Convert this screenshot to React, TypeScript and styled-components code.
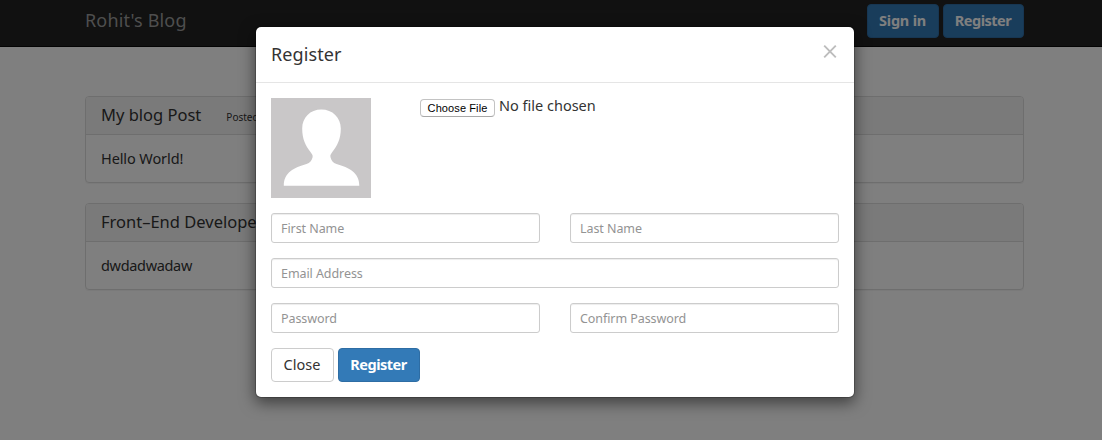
import React from "react";
import styled, { createGlobalStyle } from "styled-components";

const GlobalStyle = createGlobalStyle`
  *, *::before, *::after { box-sizing: border-box; }
  body {
    margin: 0;
    background: #fff;
    color: #333;
    font: 14.5px/20px "Noto Sans", "Open Sans", sans-serif;
    overflow: hidden;
  }
  h1, h2, h3, p { margin: 0; font-weight: 400; }
`;

const Page = styled.div`
  height: 440px;
  overflow: hidden;
`;

const Navbar = styled.header`
  display: flex;
  justify-content: space-between;
  align-items: flex-start;
  height: 47px;
  padding: 4px 78px 0 85px;
  background: #222;
  border-bottom: 1px solid #080808;
`;

const Brand = styled.h1`
  padding-top: 6px;
  font-size: 18px;
  line-height: 20px;
  color: #9d9d9d;
  letter-spacing: 0.15px;
`;

const ButtonRow = styled.div`
  display: flex;
  gap: 4px;
`;

const Button = styled.button<{ $primary?: boolean; $width: number; $track?: number }>`
  width: ${(p) => p.$width}px;
  height: 34px;
  padding: 0 1px 2px 0;
  border: 1px solid ${(p) => (p.$primary ? "#2e6da4" : "#ccc")};
  border-radius: 4px;
  background: ${(p) => (p.$primary ? "#337ab7" : "#fff")};
  color: ${(p) => (p.$primary ? "#fff" : "#333")};
  font: inherit;
  font-weight: ${(p) => (p.$primary ? 700 : 400)};
  letter-spacing: ${(p) => p.$track ?? 0}px;
  white-space: nowrap;
`;

const Posts = styled.main`
  display: flex;
  flex-direction: column;
  gap: 20px;
  padding: 49px 78px 0 85px;
`;

const Panel = styled.article`
  height: 87px;
  border: 1px solid #ddd;
  border-radius: 4px;
  box-shadow: 0 1px 1px rgba(0, 0, 0, 0.05);
  overflow: hidden;
`;

const PanelHeading = styled.div`
  display: flex;
  align-items: baseline;
  gap: 25px;
  height: 38px;
  padding: 8px 15px 0;
  background: #f5f5f5;
  border-bottom: 1px solid #ddd;
  white-space: nowrap;
`;

const PanelTitle = styled.h2`
  font-size: 16.5px;
  line-height: 20px;
`;

const Posted = styled.small`
  font-size: 10px;
`;

const PanelBody = styled.p<{ $track?: number }>`
  padding: 13px 15px 0;
  letter-spacing: ${(p) => p.$track ?? 0}px;
`;

const Backdrop = styled.div`
  position: absolute;
  inset: 0;
  display: flex;
  justify-content: center;
  align-items: flex-start;
  padding: 26px 0 0 8px;
  background: rgba(0, 0, 0, 0.5);
`;

const Modal = styled.section`
  width: 600px;
  height: 372px;
  border: 1px solid rgba(0, 0, 0, 0.2);
  border-radius: 6px;
  background: #fff;
  background-clip: padding-box;
  box-shadow: 0 5px 15px rgba(0, 0, 0, 0.5);
`;

const ModalHeader = styled.div`
  display: flex;
  justify-content: space-between;
  height: 56px;
  padding: 17px 15px 0;
  border-bottom: 1px solid #e5e5e5;
`;

const ModalTitle = styled.h2`
  font-size: 18px;
  line-height: 21px;
  letter-spacing: 0.1px;
`;

const CloseIcon = styled.button`
  display: flex;
  width: 18px;
  height: 16px;
  padding: 1px 2px;
  border: 0;
  background: none;
`;

const Form = styled.div`
  display: flex;
  flex-direction: column;
  gap: 15px;
  padding: 15px;
`;

const UploadRow = styled.div`
  display: flex;
  gap: 49px;
  height: 100px;
`;

const FilePicker = styled.div`
  display: flex;
  align-items: flex-start;
  gap: 4px;
`;

const ChooseFile = styled.button`
  width: 75px;
  height: 18px;
  margin-top: 1px;
  padding: 0;
  border: 1px solid #c3c3c3;
  border-bottom-color: #a8a8a8;
  border-radius: 4px;
  background: #fff;
  color: #000;
  font: 11px/16px "Liberation Sans", Arial, sans-serif;
  letter-spacing: 0.1px;
  white-space: nowrap;
`;

const FileName = styled.span`
  margin-top: -3px;
  white-space: nowrap;
`;

const Fields = styled.div`
  display: flex;
  gap: 30px;
`;

const Input = styled.input`
  flex: 1;
  min-width: 0;
  height: 30px;
  padding: 1px 9px 0;
  border: 1px solid #ccc;
  border-radius: 3px;
  background: #fff;
  box-shadow: inset 0 1px 1px rgba(0, 0, 0, 0.075);
  font: inherit;
  font-size: 12.5px;
  letter-spacing: -0.07px;
  &::placeholder { color: #939393; opacity: 1; }
`;

const Avatar = () => (
  <svg width="100" height="100" viewBox="0 0 100 100">
    <rect width="100" height="100" fill="#c9c7c8" />
    <path
      fill="#fff"
      d="M50.3 11.5C61.5 11.5 69.8 19.5 69.8 30.5C69.8 41.5 66 48 61.5 53.8C59.6 56.3 59 57.3 59.5 59.2C60.3 62.5 62 65 65.5 66C78 69.5 88.3 74.5 88.3 87.7H12.8C12.8 74.5 23 69.5 35.500 66C39 65 40.800 62.500 41.600 59.200C42 57.300 41.200 56.300 39.300 53.800C34.800 48 31.200 41.500 31.200 30.500C31.200 19.500 39.200 11.500 50.300 11.500Z"
    />
  </svg>
);

export default function App() {
  return (
    <Page>
      <GlobalStyle />
      <Navbar>
        <Brand>Rohit's Blog</Brand>
        <ButtonRow>
          <Button $primary $width={72} $track={-0.2}>Sign in</Button>
          <Button $primary $width={81} $track={-0.5}>Register</Button>
        </ButtonRow>
      </Navbar>
      <Posts>
        <Panel>
          <PanelHeading>
            <PanelTitle>My blog Post</PanelTitle>
            <Posted>Posted</Posted>
          </PanelHeading>
          <PanelBody $track={-0.1}>Hello World!</PanelBody>
        </Panel>
        <Panel>
          <PanelHeading>
            <PanelTitle>Front–End Developer</PanelTitle>
          </PanelHeading>
          <PanelBody $track={-0.33}>dwdadwadaw</PanelBody>
        </Panel>
      </Posts>
      <Backdrop>
        <Modal role="dialog">
          <ModalHeader>
            <ModalTitle>Register</ModalTitle>
            <CloseIcon aria-label="Close">
              <svg width="14" height="13" viewBox="0 0 14 13">
                <path d="M1.200 0.700L12.800 12.300M12.800 0.700L1.200 12.300" stroke="#bdbdbd" strokeWidth="1.900" />
              </svg>
            </CloseIcon>
          </ModalHeader>
          <Form>
            <UploadRow>
              <Avatar />
              <FilePicker>
                <ChooseFile>Choose File</ChooseFile>
                <FileName>No file chosen</FileName>
              </FilePicker>
            </UploadRow>
            <Fields>
              <Input placeholder="First Name" />
              <Input placeholder="Last Name" />
            </Fields>
            <Fields>
              <Input placeholder="Email Address" />
            </Fields>
            <Fields>
              <Input placeholder="Password" />
              <Input placeholder="Confirm Password" />
            </Fields>
            <ButtonRow>
              <Button $width={63}>Close</Button>
              <Button $primary $width={82} $track={-0.5}>Register</Button>
            </ButtonRow>
          </Form>
        </Modal>
      </Backdrop>
    </Page>
  );
}
